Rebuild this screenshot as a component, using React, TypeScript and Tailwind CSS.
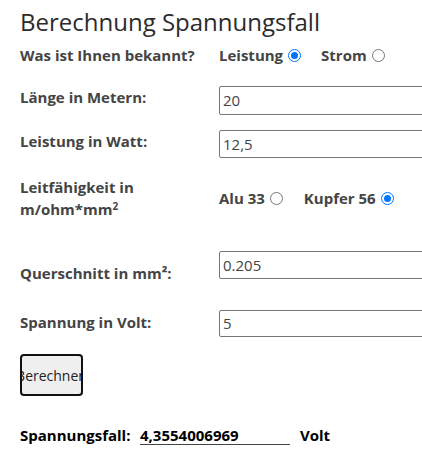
import React from "react";

const font = { fontFamily: '"Open Sans", "Noto Sans", sans-serif' };

function Radio({ checked }: { checked: boolean }) {
  return (
    <span
      className={`inline-block w-[13px] h-[13px] rounded-full box-border ml-[5px] ${
        checked ? "border-[1px] border-[#0075ff] p-[2px]" : "border border-[#767676]"
      }`}
    >
      {checked && <span className="block w-full h-full rounded-full bg-[#0075ff]" />}
    </span>
  );
}

function Input({ value, h }: { value: string; h: string }) {
  return (
    <div
      className={`w-[240px] shrink-0 ${h} border border-[#767676] rounded-[2px] flex items-center pl-[3px] text-[15px] text-[#444] font-normal`}
    >
      {value}
    </div>
  );
}

export default function App() {
  return (
    <div className="w-[422px] h-[465px] overflow-hidden bg-white pl-5" style={font}>
      <h1 className="text-[24px] leading-[32px] text-[#2b2b2b] font-normal pt-[6px] whitespace-nowrap">Berechnung Spannungsfall</h1>

      <div className="flex items-center h-5 mt-[7px] text-[15px] font-bold text-[#444] whitespace-nowrap">
        <div className="w-[199px] shrink-0">Was ist Ihnen bekannt?</div>
        <div className="flex items-center">
          Leistung <Radio checked />
          <span className="ml-[20px]">Strom</span> <Radio checked={false} />
        </div>
      </div>

      <div className="flex items-start mt-[21px] text-[15px] font-bold text-[#444] whitespace-nowrap">
        <div className="w-[199px] shrink-0 pt-[1px] leading-5">Länge in Metern:</div>
        <Input value="20" h="h-[29px]" />
      </div>

      <div className="flex items-start mt-[15px] text-[15px] font-bold text-[#444] whitespace-nowrap">
        <div className="w-[199px] shrink-0 pt-[1px] leading-5">Leistung in Watt:</div>
        <Input value="12,5" h="h-[28px]" />
      </div>

      <div className="flex items-center mt-[18px] text-[15px] font-bold text-[#444] whitespace-nowrap">
        <div className="w-[199px] shrink-0 leading-[22px]">
          Leitfähigkeit in
          <br />
          m/ohm*mm<sup className="text-[10px]">2</sup>
        </div>
        <div className="flex items-center">
          Alu 33 <Radio checked={false} />
          <span className="ml-[21px]">Kupfer 56</span> <Radio checked />
        </div>
      </div>

      <div className="flex items-start mt-[31px] text-[15px] font-bold text-[#444] whitespace-nowrap">
        <div className="w-[199px] shrink-0 pt-[12px] leading-5">Querschnitt in mm²:</div>
        <Input value="0.205" h="h-[28px]" />
      </div>

      <div className="flex items-start mt-[27px] text-[15px] font-bold text-[#444] whitespace-nowrap">
        <div className="w-[199px] shrink-0 pt-[2px] leading-5">Spannung in Volt:</div>
        <Input value="5" h="h-[27px]" />
      </div>

      <div className="mt-[17px] w-[63px] h-[42px] border-2 border-[#111] rounded-[4px] bg-[#efefef] flex items-center justify-center overflow-hidden text-[14px] text-[#222] whitespace-nowrap">
        Berechnen
      </div>

      <div className="flex items-center mt-[29px] text-[15px] font-bold text-black leading-5 whitespace-nowrap">
        <span className="w-[120px] shrink-0">Spannungsfall:</span>
        <span className="w-[150px] shrink-0 border-b border-[#444] leading-[18px]">4,3554006969</span>
        <span className="ml-[10px]">Volt</span>
      </div>
    </div>
  );
}
